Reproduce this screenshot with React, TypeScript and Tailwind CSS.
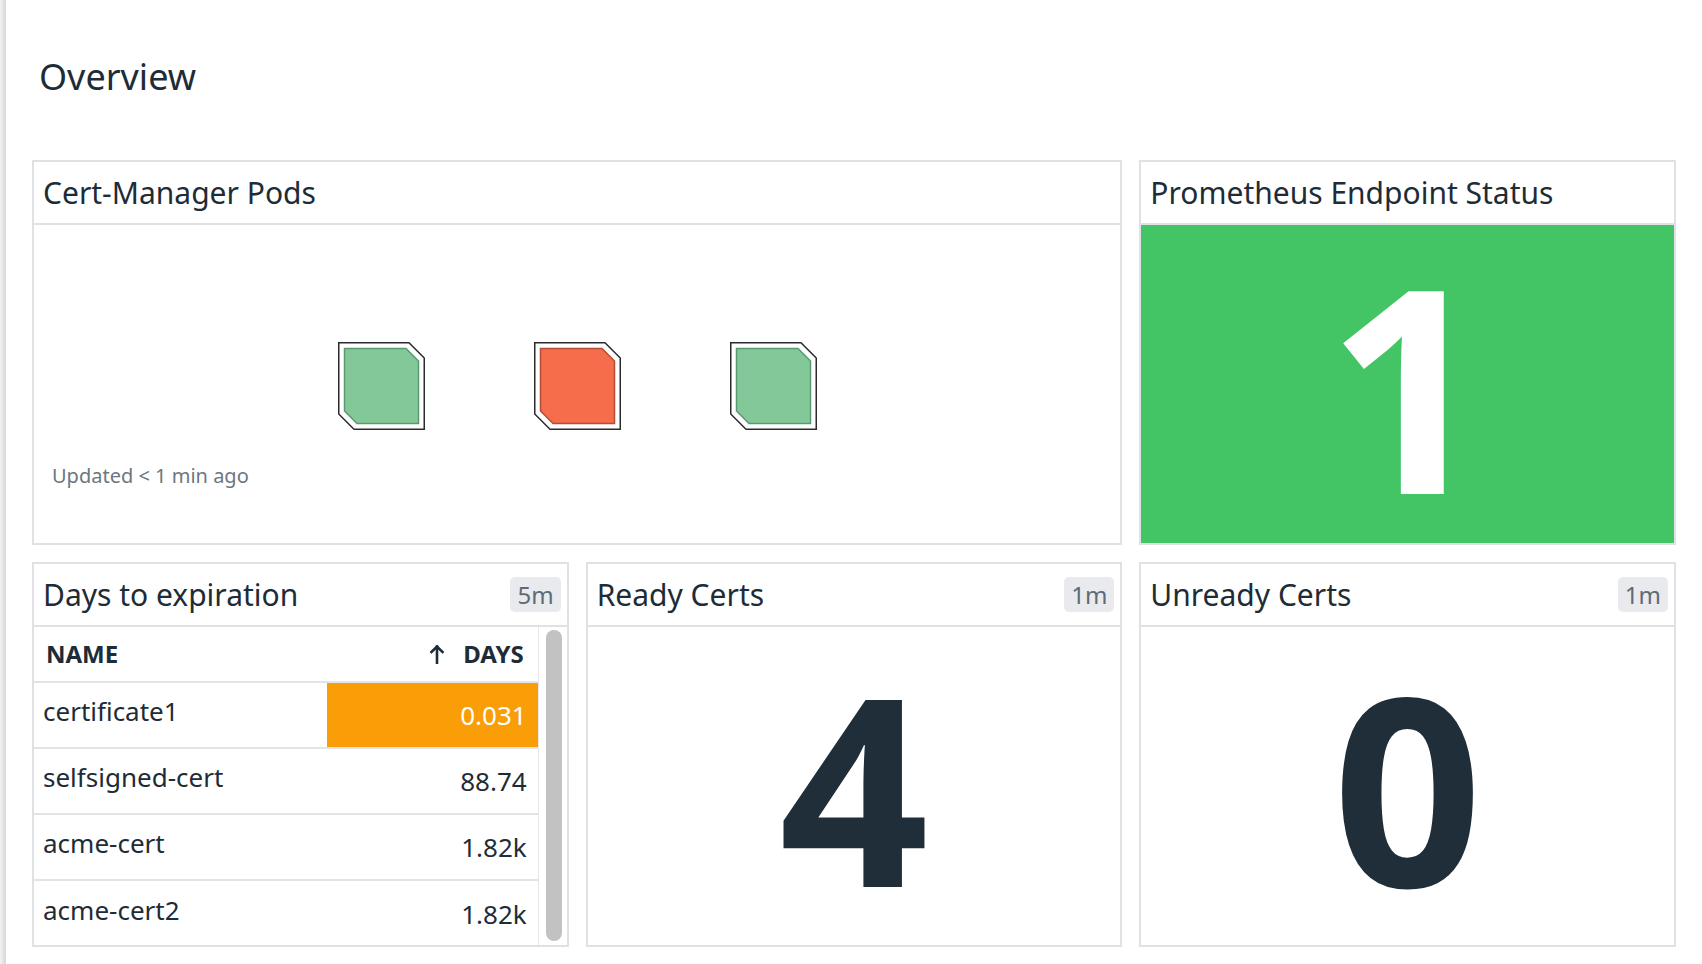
import type { ReactNode } from 'react'

type Cert = { name: string; days: string; warn?: boolean }

const certs: Cert[] = [
  { name: 'certificate1', days: '0.031', warn: true },
  { name: 'selfsigned-cert', days: '88.74' },
  { name: 'acme-cert', days: '1.82k' },
  { name: 'acme-cert2', days: '1.82k' },
]

function Card({ title, badge, className, children }: { title: string; badge?: string; className?: string; children: ReactNode }) {
  return (
    <div className={`flex min-w-0 flex-col border-2 border-[#e0e1e5] bg-white ${className ?? ''}`}>
      <div className="flex h-[63px] shrink-0 items-center justify-between border-b-2 border-[#e0e1e5] pl-[9px] pr-[6px]">
        <span className="text-[30px] text-[#1d2c36]">{title}</span>
        {badge && (
          <span className="h-[35px] rounded-[5px] bg-[#e9eaed] px-[7px] text-[24px] leading-[35px] text-[#5f6b74]">{badge}</span>
        )}
      </div>
      <div className="flex min-h-0 flex-1 flex-col">{children}</div>
    </div>
  )
}

function Pod({ fill, stroke }: { fill: string; stroke: string }) {
  return (
    <svg width="87" height="88" viewBox="0 0 87 88">
      <polygon points="0.75,0.75 71,0.75 86.25,16 86.25,87.25 16,87.25 0.75,72" fill="#fff" stroke="#2b2b2b" strokeWidth="1.5" />
      <polygon points="6.5,6.5 68,6.5 80.5,19 80.5,81.5 19,81.5 6.5,69" fill={fill} stroke={stroke} strokeWidth="1.5" />
    </svg>
  )
}

function SortArrow() {
  return (
    <svg width="16" height="20" viewBox="0 0 16 20" fill="none" stroke="#1d2c36" strokeWidth="2.6" strokeLinecap="square">
      <path d="M8 2.5V19" />
      <path d="M2.5 8L8 2.5L13.5 8" />
    </svg>
  )
}

function BigValue({ value, className }: { value: string; className: string }) {
  return <div className={`flex flex-1 items-center justify-center font-bold leading-none ${className}`}>{value}</div>
}

export default function App() {
  return (
    <div className="flex min-h-screen bg-white font-['Noto_Sans','Open_Sans',sans-serif]">
      <div className="w-[6px] shrink-0 bg-gradient-to-r from-[#f3f3f3] to-[#d6d6d6]" />
      <main className="flex-1 pl-[26px] pr-[26px] pt-[53px]">
        <h1 className="pl-[7px] text-[36px] leading-[48px] text-[#1d2c36]">Overview</h1>

        <div className="mt-[59px] grid grid-cols-3 grid-rows-[385px_385px] gap-x-[17px] gap-y-[17px]">
          <Card title="Cert-Manager Pods" className="col-span-2">
            <div className="flex justify-center gap-[109px] pt-[117px]">
              <Pod fill="#83c899" stroke="#5b9a70" />
              <Pod fill="#f66d4b" stroke="#b34e35" />
              <Pod fill="#83c899" stroke="#5b9a70" />
            </div>
            <p className="mt-[32px] pl-[18px] text-[20px] leading-[28px] text-[#6c7780]">Updated &lt; 1 min ago</p>
          </Card>

          <Card title="Prometheus Endpoint Status">
            <BigValue value="1" className="bg-[#43c465] text-[284px] text-white" />
          </Card>

          <Card title="Days to expiration" badge="5m">
            <div className="flex min-h-0 flex-1 overflow-hidden">
              <div className="min-w-0 flex-1">
                <div className="flex h-[56px] items-center border-b-2 border-[#e3e4e8] text-[24px] font-bold text-[#1d2c36]">
                  <span className="flex-1 pl-[12px]">NAME</span>
                  <span className="flex w-[211px] items-center justify-end gap-[18px] pr-[14px]">
                    <SortArrow />
                    DAYS
                  </span>
                </div>
                {certs.map((c) => (
                  <div key={c.name} className="flex h-[66px] border-b-2 border-[#e3e4e8] text-[26px] text-[#1d2c36] last:border-b-0">
                    <span className="flex flex-1 items-center pb-[8px] pl-[9px]">{c.name}</span>
                    <span className={`flex w-[211px] items-center justify-end pr-[11px] ${c.warn ? 'bg-[#f99e06] text-white' : ''}`}>{c.days}</span>
                  </div>
                ))}
              </div>
              <div className="flex w-[29px] shrink-0 border-l border-[#e6e7ea] pb-[4px] pl-[7px] pt-[3px]">
                <div className="w-[16px] rounded-full bg-[#c2c2c2]" />
              </div>
            </div>
          </Card>

          <Card title="Ready Certs" badge="1m">
            <BigValue value="4" className="text-[262px] text-[#1f2e38]" />
          </Card>

          <Card title="Unready Certs" badge="1m">
            <BigValue value="0" className="text-[262px] text-[#1f2e38]" />
          </Card>
        </div>
      </main>
    </div>
  )
}
